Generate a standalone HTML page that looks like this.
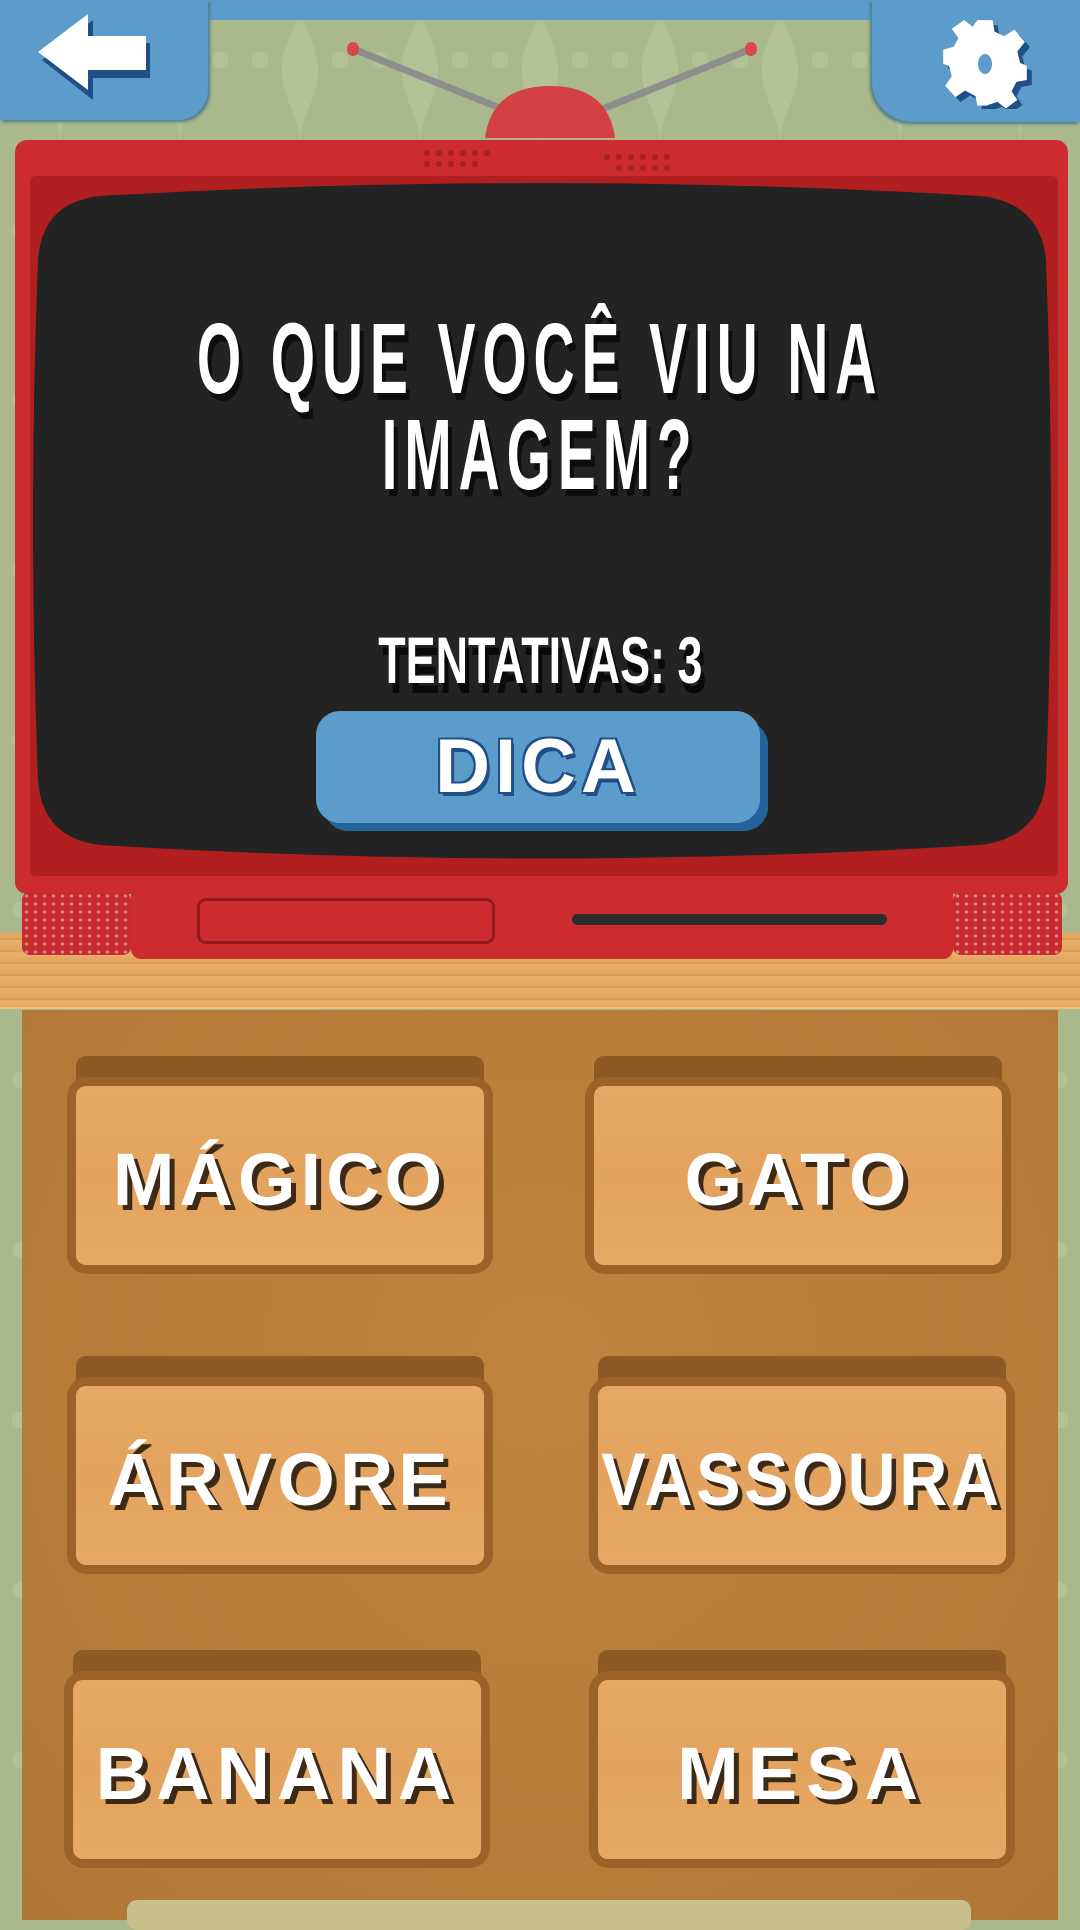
<!DOCTYPE html>
<html><head><meta charset="utf-8"><style>
*{margin:0;padding:0;box-sizing:border-box}
body{width:1080px;height:1920px;overflow:hidden;position:relative;background:#a9b98b;font-family:"Liberation Sans",sans-serif}
.a{position:absolute}
.tv-title{position:absolute;left:-500px;width:2080px;text-align:center;color:#fff;font-weight:bold;font-size:100px;letter-spacing:12px;text-shadow:7px 7px 0 #0d0d0d;white-space:nowrap}
.tv-title span{display:inline-block;transform:scaleX(.57)}
.btn .tab{position:absolute;top:0;left:9px;right:9px;height:40px;background:#8e5a24;border-radius:10px 10px 0 0}
.btn .frame{position:absolute;top:21px;left:0;right:0;bottom:0;background:#9c6329;border-radius:20px}
.btn .face{position:absolute;top:30px;left:9px;right:9px;bottom:9px;background:linear-gradient(180deg,#e6a965,#e3a35e 50%,#e6a965);border-radius:10px;display:flex;align-items:center;justify-content:center}
.lbl{color:#fff;font-weight:bold;font-size:74px;letter-spacing:5px;text-shadow:5px 5px 0 #3c2a17;display:inline-block;padding-top:8px;white-space:nowrap}
</style></head><body>
<svg class="a" style="left:0;top:0" width="1080" height="1920">
<defs><pattern id="p" width="120" height="170" patternUnits="userSpaceOnUse">
<path d="M60 10 C50 40 35 60 45 90 C50 110 60 120 60 150 C60 120 70 110 75 90 C85 60 70 40 60 10Z" fill="#b3c296"/>
<circle cx="20" cy="60" r="8" fill="#b3c296"/><circle cx="100" cy="60" r="8" fill="#b3c296"/>
</pattern></defs>
<rect width="1080" height="1920" fill="url(#p)"/>
</svg>
<div class="a" style="left:0;top:0;width:1080px;height:20px;background:#5b9ccb"></div>
<div class="a" style="left:0;top:0;width:208px;height:120px;background:#5b9ccb;border-radius:0 0 30px 0;box-shadow:2px 2px 3px #4d7a8a"></div>
<div class="a" style="left:872px;top:0;width:208px;height:122px;background:#5b9ccb;border-radius:0 0 0 40px;box-shadow:-2px 2px 3px #4d7a8a"></div>
<svg class="a" style="left:30px;top:14px" width="130" height="95" viewBox="0 0 130 95">
<path d="M63 6 L12 46 L63 86 L63 64 L120 64 L120 29 L63 29Z" fill="#1f4f86"/>
<path d="M58 0 L8 38 L58 76 L58 56 L116 56 L116 22 L58 22Z" fill="#fff"/>
</svg>
<svg class="a" style="left:935px;top:14px" width="100" height="95" viewBox="-50 -47 100 95">
<g transform="translate(5,5)" fill="#1f4f86"><path id="g" d="M-8 -43 H8 L10 -31 L20 -26 L31 -33 L42 -20 L34 -10 L37 2 L44 5 V20 L33 22 L28 32 L34 41 L22 50 L13 43 L4 46 L2 47 H-8 L-10 37 L-21 31 L-31 38 L-42 26 L-35 16 L-38 5 L-44 3 V-12 L-33 -15 L-28 -24 L-35 -34 L-22 -43 L-13 -36 Z" transform="scale(.95)"/></g>
<use href="#g" fill="#fff"/>
<ellipse cx="0" cy="3" rx="7" ry="10" fill="#5b9ccb"/>
</svg>
<svg class="a" style="left:0;top:0" width="1080" height="180">
<line x1="353" y1="49" x2="510" y2="112" stroke="#8e8e8e" stroke-width="7"/>
<line x1="751" y1="49" x2="595" y2="112" stroke="#8e8e8e" stroke-width="7"/>
<ellipse cx="353" cy="49" rx="6" ry="7" fill="#d9474a"/>
<ellipse cx="751" cy="49" rx="6" ry="7" fill="#d9474a"/>
<path d="M485 138 C490 100 515 86 550 86 C585 86 610 100 615 138Z" fill="#d44143"/>
</svg>
<div class="a" style="left:15px;top:140px;width:1053px;height:754px;background:#cc2c2d;border-radius:12px"></div>
<div class="a" style="left:30px;top:176px;width:1028px;height:700px;background:#b21f21;border-radius:6px"></div>
<svg class="a" style="left:0;top:140px" width="1080" height="40">
<g fill="#a82224">
<circle cx="427" cy="13" r="3"/><circle cx="439" cy="13" r="3"/><circle cx="451" cy="13" r="3"/><circle cx="463" cy="13" r="3"/><circle cx="475" cy="13" r="3"/><circle cx="487" cy="13" r="3"/>
<circle cx="427" cy="24" r="3"/><circle cx="439" cy="24" r="3"/><circle cx="451" cy="24" r="3"/><circle cx="463" cy="24" r="3"/><circle cx="475" cy="24" r="3"/>
<circle cx="607" cy="17" r="3"/><circle cx="619" cy="17" r="3"/><circle cx="631" cy="17" r="3"/><circle cx="643" cy="17" r="3"/><circle cx="655" cy="17" r="3"/><circle cx="667" cy="17" r="3"/>
<circle cx="619" cy="28" r="3"/><circle cx="631" cy="28" r="3"/><circle cx="643" cy="28" r="3"/><circle cx="655" cy="28" r="3"/><circle cx="667" cy="28" r="3"/>
</g></svg>
<svg class="a" style="left:0;top:170px" width="1080" height="710">
<path d="M100 26 Q540 0 980 26 Q1040 32 1046 90 Q1056 350 1046 610 Q1040 668 980 675 Q540 702 100 675 Q42 668 38 610 Q28 350 38 90 Q42 32 100 26Z" fill="#232323"/>
</svg>
<div class="tv-title" style="top:302px"><span>O QUE VOCÊ VIU NA</span></div>
<div class="tv-title" style="top:398px"><span>IMAGEM?</span></div>
<div class="a" style="left:-500px;width:2080px;top:622px;text-align:center;color:#fff;font-weight:bold;font-size:66px;text-shadow:6px 10px 0 #0a0a0a;white-space:nowrap"><span style="display:inline-block;transform:scaleX(.68)">TENTATIVAS: 3</span></div>
<div class="a" style="left:324px;top:721px;width:444px;height:110px;background:#23629a;border-radius:24px"></div>
<div class="a" style="left:316px;top:711px;width:444px;height:112px;background:#5c9ccb;border-radius:24px;text-align:center;line-height:112px;color:#fff;font-weight:bold;font-size:76px;letter-spacing:5px;text-shadow:3px 4px 0 #1f4f86,-2px -2px 0 #1f4f86,2px -2px 0 #1f4f86,-2px 2px 0 #1f4f86">DICA</div>
<div class="a" style="left:0;top:933px;width:1080px;height:76px;background:repeating-linear-gradient(180deg,#e5a862 0 5px,#dc9d57 5px 7px,#e8ad69 7px 12px);border-bottom:2px solid #f0bf80"></div>
<div class="a" style="left:22px;top:892px;width:109px;height:63px;background:#c92a2d;border-radius:8px;background-image:radial-gradient(#d98a8a 1.6px,transparent 2px);background-size:9px 8px"></div>
<div class="a" style="left:953px;top:892px;width:109px;height:63px;background:#c92a2d;border-radius:8px;background-image:radial-gradient(#d98a8a 1.6px,transparent 2px);background-size:9px 8px"></div>
<div class="a" style="left:131px;top:880px;width:822px;height:79px;background:#cc2c2d;border-radius:0 0 10px 10px"></div>
<div class="a" style="left:197px;top:898px;width:298px;height:46px;border:3px solid #921a1c;border-radius:9px"></div>
<div class="a" style="left:572px;top:914px;width:315px;height:11px;background:#2e2b2b;border-radius:6px"></div>
<div class="a" style="left:22px;top:1010px;width:1036px;height:910px;background:radial-gradient(ellipse at 50% 40%,#bd853f,#b57b38 70%,#b07636)"></div>
<div class="a" style="left:127px;top:1900px;width:844px;height:30px;background:#c8c08b;border-radius:10px"></div>
<div class="a btn" style="left:67px;top:1056px;width:426px;height:218px"><div class="tab"></div><div class="frame"></div><div class="face"><span class="lbl">MÁGICO</span></div></div>
<div class="a btn" style="left:585px;top:1056px;width:426px;height:218px"><div class="tab"></div><div class="frame"></div><div class="face"><span class="lbl">GATO</span></div></div>
<div class="a btn" style="left:67px;top:1356px;width:426px;height:218px"><div class="tab"></div><div class="frame"></div><div class="face"><span class="lbl">ÁRVORE</span></div></div>
<div class="a btn" style="left:589px;top:1356px;width:426px;height:218px"><div class="tab"></div><div class="frame"></div><div class="face"><span class="lbl" style="transform:scaleX(.9);letter-spacing:4px">VASSOURA</span></div></div>
<div class="a btn" style="left:64px;top:1650px;width:426px;height:218px"><div class="tab"></div><div class="frame"></div><div class="face"><span class="lbl" style="letter-spacing:7px">BANANA</span></div></div>
<div class="a btn" style="left:589px;top:1650px;width:426px;height:218px"><div class="tab"></div><div class="frame"></div><div class="face"><span class="lbl" style="letter-spacing:9px">MESA</span></div></div>
</body></html>
